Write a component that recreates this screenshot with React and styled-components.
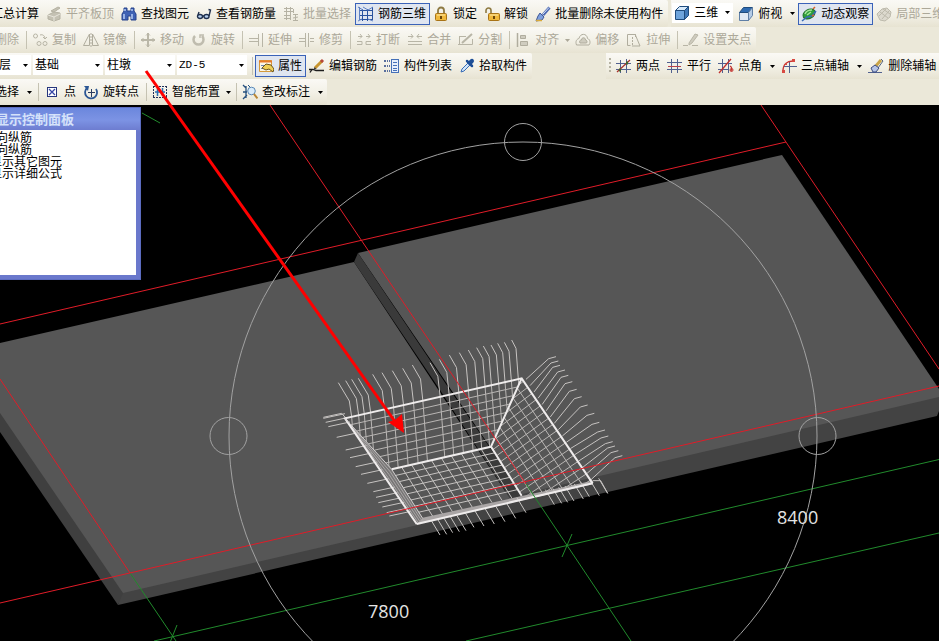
import * as React from "react";

import styled, { createGlobalStyle, css } from "styled-components";

const GlobalStyle = createGlobalStyle`
  * {
    box-sizing: border-box;
  }

  body {
    margin: 0;
    background: #000;
    font-family: "Liberation Sans", "Noto Sans CJK SC", sans-serif;
    font-size: 12px;
    line-height: 16px;
    color: #000;
  }
`;

const Window = styled.div`
  position: relative;
  display: flex;
  flex-direction: column;
  min-height: 100vh;
  overflow: hidden;
`;

const ToolArea = styled.header`
  background: #ebe8d9;
  overflow: hidden;
`;

const ToolRow = styled.div`
  display: flex;
  height: ${props => (props.$first ? "27px" : "26px")};
  margin-left: -14px;
`;

const Band = styled.div`
  display: flex;
  flex: none;
  align-items: center;
  padding: 0 1px 0 ${props => props.$lead || 0}px;
  background: linear-gradient(#faf9f5, #f3f1e7 50%, #e7e3d2);
  border-radius: 0 2px 2px 0;
  white-space: nowrap;
`;

const Spacer = styled.div`
  flex: none;
  width: ${props => props.$width}px;
`;

const ToolButton = styled.button`
  display: flex;
  flex: none;
  align-items: center;
  gap: 4px;
  height: 22px;
  padding: 0 3px 0 2px;
  border: 1px solid transparent;
  background: none;
  font: inherit;
  color: #000;

  &:disabled {
    color: #aca899;
  }

  ${props =>
    props.$pressed &&
    css`
      border-color: #3a62b8;
      background: #dfe5f0;
    `}
`;

const Icon = styled.svg`
  flex: none;
  width: 16px;
  height: 16px;
  fill: none;
`;

const CaretButton = styled.button`
  display: flex;
  flex: none;
  align-items: center;
  justify-content: center;
  width: ${props => (props.$tight ? "9px" : "12px")};
  height: 22px;
  padding: 0;
  border: 0;
  background: none;
  color: ${props => (props.disabled ? "#aca899" : "#000")};
`;

const CaretShape = styled.svg`
  flex: none;
  width: 5px;
  height: 3px;
  fill: currentColor;
`;

const Divider = styled.span`
  flex: none;
  width: 1px;
  height: 18px;
  margin: 0 2px 0 3px;
  background: #c5c2b2;
`;

const Grip = styled.span`
  flex: none;
  width: 2px;
  height: 16px;
  margin: 0 2px 0 3px;
  background: repeating-linear-gradient(#b5b2a2 0 2px, transparent 2px 4px);
`;

const Combo = styled.label`
  display: flex;
  flex: none;
  align-items: center;
  gap: 4px;
  width: ${props => props.$width}px;
  height: 20px;
  margin: 0 2px 2px 0;
  padding: 0 3px 0 2px;
  background: #fff;

  select {
    flex: 1;
    min-width: 0;
    appearance: none;
    padding: 0;
    border: 0;
    background: none;
    font: inherit;
    color: inherit;
    ${props =>
      props.$mono &&
      css`
        font-family: "Liberation Mono", monospace;
        font-size: 11px;
      `}
  }
`;

const Viewport = styled.main`
  position: relative;
  flex: 1;
  min-height: 536px;
  background: #000;
`;

const Scene = styled.svg`
  position: absolute;
  inset: 0;
  width: 100%;
  height: 100%;
  fill: none;

  text {
    font-family: "Open Sans", "Noto Sans", sans-serif;
    font-size: 18px;
    fill: #e4e4e4;
  }
`;

const Annotation = styled.svg`
  position: absolute;
  inset: 0;
  width: 100%;
  height: 100%;
  pointer-events: none;
`;

const Palette = styled.section`
  position: absolute;
  top: 2px;
  left: -16px;
  width: 157px;
  padding: 0 4px 4px 5px;
  background: linear-gradient(#6b87dd, #7c93e4 12px, #6a78cc 24px, #6a78cc);
  border: 1px solid #5c6cc0;
`;

const PaletteTitle = styled.h2`
  margin: 0;
  padding: 3px 0 2px 6px;
  font-size: 13px;
  line-height: 17px;
  font-weight: bold;
  color: #d5e2fa;
  white-space: nowrap;
`;

const PaletteList = styled.ul`
  min-height: 145px;
  margin: 0;
  padding: 2px 0;
  list-style: none;
  background: #fff;
  line-height: 12px;
  white-space: nowrap;
`;

const PaletteItem = styled.li`
  padding-left: ${props => (props.$nested ? "6px" : "0")};
`;

const Caret = () => (
  <CaretShape viewBox="0 0 5 3">
    <path d="M0 0h5L2.500 3z" />
  </CaretShape>
);

const glyphs = {
  level: (
    <g fill="#c4c1b3" stroke="#b5b2a3">
      <path d="M2 9l6-3 6 1v6l-6 2-6-2zM5 5l7-4 2 1-6 4z" />
      <path d="M2 9l6 2v4M8 11l6-3" stroke="#e8e6dc" />
    </g>
  ),
  find: (
    <g>
      <path
        d="M3 2h3v3h4V2h3v3l2 3v6h-5v-4H7v4H1V8l2-3z"
        fill="#3f62b4"
        stroke="#27438c"
      />
      <path d="M3 8v5M11 8v5M4 3v2M11 3v2" stroke="#b7cdf5" strokeWidth="1.500" />
    </g>
  ),
  glasses: (
    <g stroke="#20304e" strokeWidth="1.400">
      <ellipse cx="4" cy="10.500" rx="2.500" ry="2" fill="#b8d1ee" />
      <ellipse cx="10.500" cy="10.500" rx="2.500" ry="2" fill="#b8d1ee" />
      <path d="M6.500 10h1.500M2 9l1-3M13 10l1.500-6-2-.5" />
    </g>
  ),
  batch: (
    <g stroke="#b5b2a3">
      <path d="M1 2.500h9M1 5.500h9M1 9.500h6M1 12.500h6M3.500 1v13M7.500 1v13M10.500 3v4" />
      <path d="M10 8.500h5M10 12l5-1M12.500 8v7M10 14.500h5" />
    </g>
  ),
  rebar: (
    <g stroke="#29529e" strokeWidth="1">
      <path d="M4.500 3v12M9.500 3v12M14.500 1v13M1 4.500h14M1 9.500h14M1 13.500h14" />
      <path d="M0 1l5 3M5 1l5 3M10 4l5-3M0 15l4-2M10 13l5 2M1.500 1v13" stroke="#5d80c2" />
    </g>
  ),
  lock: (
    <g>
      <path d="M5 8V4.500a3 3 0 016 0V8" stroke="#8e7a42" strokeWidth="1.800" />
      <rect x="2.500" y="7.500" width="11" height="7" rx="1" fill="#f0b93c" stroke="#a87316" />
      <path d="M4 9h8" stroke="#fde9a5" />
      <path d="M8 10v3" stroke="#6b4708" strokeWidth="2" />
    </g>
  ),
  unlock: (
    <g>
      <path d="M2 7V4.500a2.500 2.500 0 015 0V8" stroke="#8e7a42" strokeWidth="1.600" />
      <rect x="4.500" y="7.500" width="11" height="7" rx="1" fill="#f0b93c" stroke="#a87316" />
      <path d="M6 9h8" stroke="#fde9a5" />
      <path d="M10 10v3" stroke="#6b4708" strokeWidth="2" />
    </g>
  ),
  brush: (
    <g>
      <path d="M14.500 1.500L8 9" stroke="#4f6cb4" strokeWidth="3" />
      <path d="M14 1.500L8 8" stroke="#d7e2f7" />
      <path d="M5 7l4 4-2 3-6 1 2-5z" fill="#7ea0de" stroke="#3d5798" />
      <path d="M1 14.500h6" stroke="#d8a93a" strokeWidth="1.500" />
    </g>
  ),
  cube: (
    <g stroke="#1f4c7e" strokeLinejoin="round">
      <path d="M1.500 5.500h9v9h-9z" fill="#6ea4dc" />
      <path d="M1.500 5.500l4-4h9l-4 4z" fill="#d6e9fa" />
      <path d="M10.500 5.500l4-4v9l-4 4z" fill="#3f78b8" />
    </g>
  ),
  cubeTop: (
    <g stroke="#5f7fa6" strokeLinejoin="round">
      <path d="M1.500 6.500h9v8h-9z" fill="#dfe9f5" />
      <path d="M1.500 6.500l4-5h9l-4 5z" fill="#2f6bb0" stroke="#1f4c7e" />
      <path d="M10.500 6.500l4-5v8l-4 5z" fill="#b4cbe6" />
    </g>
  ),
  orbit: (
    <g>
      <ellipse cx="8" cy="8" rx="6.500" ry="4.500" fill="#2f9e3b" stroke="#1e6d2b" transform="rotate(-30 8 8)" />
      <path d="M4 8c1-3 4-4 7-4M6 9l4-3" stroke="#a6e59a" strokeWidth="1.500" />
      <path d="M1 15l5-4 5-1 4-5" stroke="#376bb5" strokeWidth="1.500" />
      <path d="M12 3l2-2M11 10l2-1" stroke="#d4622d" strokeWidth="1.500" />
    </g>
  ),
  partial: (
    <g fill="#dcd9ce" stroke="#bdbaac">
      <path d="M1 8l5-5 5-1 4 4-1 5-5 4-5-1z" />
      <path d="M4 6l8 6M7 3l7 5M3 10l7-7M6 13l7-8" />
    </g>
  ),
  copy: (
    <g stroke="#b8b5a6">
      <circle cx="3.500" cy="4" r="2" />
      <circle cx="7" cy="11.500" r="2" />
      <circle cx="13" cy="11.500" r="2" />
      <path d="M8 3c3-1 5 1 5 4M11 5l2 2 2-2" />
    </g>
  ),
  mirror: (
    <g stroke="#b0ad9e">
      <path d="M6.500 2v11.500h-6zM9.500 2v11.500h6z" />
      <path d="M8 1v14" strokeDasharray="2 1" />
    </g>
  ),
  move: (
    <g stroke="#bab7a8">
      <path d="M7.500 1v14M8.500 1v14M1 7.500h14M1 8.500h14" />
      <path d="M6 3.500L8 1.500l2 2M6 12.500l2 2 2-2M3.500 6l-2 2 2 2M12.500 6l2 2-2 2" />
    </g>
  ),
  rotate: (
    <g stroke="#bfbcae" strokeWidth="2.500">
      <path d="M4 4a5 5 0 107 0" />
      <path d="M9 6V3h4" strokeWidth="1.500" />
    </g>
  ),
  extend: (
    <g stroke="#b8b5a6">
      <path d="M1 6.500h9M1 9.500h9" />
      <path d="M10.500 2v12M14.500 1v14" />
    </g>
  ),
  trim: (
    <g stroke="#b8b5a6">
      <path d="M0 6.500h6M0 9.500h6M11 6.500h4M11 9.500h4" />
      <path d="M6.500 1v14M9.500 1v14" />
    </g>
  ),
  breakLine: (
    <g stroke="#b8b5a6">
      <path d="M1 9.500h5v3H1M15 9.500h-5v3h5" />
      <path d="M2 4.500h4M4 2l2 2.500-2 2M14 4.500h-4M12 2l2 2.500-2 2" />
    </g>
  ),
  merge: (
    <g stroke="#b8b5a6">
      <path d="M1 9.500h14M1 12.500h14" />
      <path d="M1 4.500h5M4 2l2 2.500-2 2M15 4.500h-5M12 2l-2 2.500 2 2" />
    </g>
  ),
  split: (
    <g stroke="#b8b5a6">
      <path d="M1 4.500h7M1.500 4v8M0 12.500h14.500V7" />
      <path d="M4 11L14 2" strokeWidth="2" />
    </g>
  ),
  align: (
    <g stroke="#b0ad9e">
      <path d="M2.500 1v14" strokeWidth="1.500" />
      <path d="M5.500 3.500h5v3h-5zM5.500 9.500h7v4h-7z" fill="#cfccbf" />
    </g>
  ),
  offset: (
    <g stroke="#b0ad9e">
      <path d="M1.500 13C0 9 2 7 4 6.500 5 1 12 1 12.500 6.500c3 1 3 5 1.500 6.500z" />
      <path d="M5 11c-1-2 0-3 1.500-3 0-3 4-3 4 0 1.500 0 2 2 1 3z" fill="#cfccbf" />
    </g>
  ),
  stretch: (
    <g stroke="#b0ad9e">
      <path d="M9.500 5V2.500h-8v11h3M9 2l5 12H6" />
      <path d="M6.500 5v9" strokeDasharray="2 1" />
    </g>
  ),
  gripPoint: (
    <g stroke="#b8b5a6">
      <path d="M0 13.500h5M9 13.500h6" />
      <path d="M6 11l6-9 3 1-6 8-3 2z" fill="#cfccbf" />
    </g>
  ),
  props: (
    <g>
      <path d="M1.500 2.500h12v11h-12z" fill="#fdf6e6" stroke="#d59a3b" />
      <path d="M1 3.500h13" stroke="#e8792b" strokeWidth="2" />
      <path d="M3 7.500h3M3 10.500h2" stroke="#6d87b7" />
      <path d="M4 10l4-4 5 1 3 4-1 3-4-3-3 1-2-1z" fill="#efcf55" stroke="#6a5420" />
    </g>
  ),
  editRebar: (
    <g>
      <path d="M0 11.500h4l3 1h8M1 14.500l2-3" stroke="#1c1c1c" strokeWidth="1.300" />
      <path d="M6 10l7-7" stroke="#c8952e" strokeWidth="3" />
      <path d="M12 4l2-2" stroke="#b5473b" strokeWidth="3" />
      <path d="M4.500 12l1-3 2 2z" fill="#333" />
    </g>
  ),
  list: (
    <g>
      <path d="M0 3h2M0 8h2M0 13h2M3 3h1M3 8h1M3 13h1M5 3h1M5 8h1M5 13h1" stroke="#5a6f9d" strokeWidth="2" />
      <rect x="7.500" y="1.500" width="7" height="13" fill="#e6eefb" stroke="#4570b8" />
      <path d="M9 4.500h4M9 7.500h4M9 10.500h4M9 12.500h4" stroke="#4570b8" />
    </g>
  ),
  picker: (
    <g>
      <path d="M2 14l1-3 6-6 2 2-6 6z" fill="#cfe4fa" stroke="#3a6db5" />
      <path d="M8 3l5 5M10 5l3-3" stroke="#1d4e97" strokeWidth="2.500" strokeLinecap="round" />
      <path d="M11 5l2-2" stroke="#1d4e97" strokeWidth="4" strokeLinecap="round" />
    </g>
  ),
  twoPoint: (
    <g>
      <path d="M4.500 2v13M10.500 1v14M0 5.500h15M0 11.500h15" stroke="#51618f" />
      <path d="M1 14L14 2" stroke="#a5322c" strokeWidth="1.200" />
      <path d="M3 12h2M10 5h2" stroke="#41682a" strokeWidth="3" />
    </g>
  ),
  parallel: (
    <g>
      <path d="M4.500 1v14M10.500 1v14" stroke="#51618f" />
      <path d="M0 4.500h15M0 11.500h15" stroke="#51618f" />
      <path d="M1 8.500h13" stroke="#b8434b" />
    </g>
  ),
  angle: (
    <g>
      <path d="M4.500 1v14M10.500 1v14M0 5.500h14M0 11.500h11" stroke="#51618f" />
      <path d="M1 15L13 1M12 8c2 1 2 3 1 5" stroke="#c3322e" strokeWidth="1.300" />
      <circle cx="13.500" cy="12" r="1.500" stroke="#c3322e" />
    </g>
  ),
  threePoint: (
    <g>
      <path d="M8.500 3v12M3 8.500h13" stroke="#51618f" />
      <path d="M2 13c0-7 4-10 10-10" stroke="#c8322e" strokeWidth="1.300" />
      <path d="M1 12h3v3H1zM4 5h2v2H4zM11 1h3v3h-3z" fill="#d84a42" />
    </g>
  ),
  eraser: (
    <g>
      <path d="M0 14.500h14" stroke="#51618f" />
      <path d="M7 9l6-7" stroke="#caa548" strokeWidth="3" />
      <path d="M13 1l2 2-5 7" stroke="#55637f" />
      <path d="M3 10l4-3 4 3-3 4H5z" fill="#b6c4e6" stroke="#3c4c80" />
    </g>
  ),
  point: (
    <g stroke="#26367c">
      <rect x="3.500" y="3.500" width="9" height="9" fill="#fff" />
      <path d="M5 5l6 6M11 5l-6 6" stroke="#3646a6" strokeWidth="1.300" />
    </g>
  ),
  rotatePoint: (
    <g>
      <path d="M4 4a6 6 0 109 1" stroke="#2b5694" strokeWidth="1.800" />
      <path d="M1 2l5 0-1 5z" fill="#2b5694" />
      <path d="M8.500 5v8M5 8.500h7" stroke="#2b3d60" />
    </g>
  ),
  smart: (
    <g>
      <path d="M1.500 2v12M14.500 2v12M1 2.500h14M1 13.500h14" stroke="#222f57" strokeDasharray="2 1" />
      <path d="M5.500 4v8M10.500 4v8M3 8h10" stroke="#2d6eb0" strokeWidth="1.500" />
    </g>
  ),
  check: (
    <g>
      <path d="M1 1l3 3M1 15l4-4M4 2v12M1 8h4" stroke="#26507f" strokeWidth="1.300" />
      <circle cx="9.500" cy="7" r="3.800" fill="#d9ecfb" stroke="#5a87b5" />
      <path d="M12 10l3.500 4.500" stroke="#b98634" strokeWidth="2" />
      <path d="M6 1l2 2" stroke="#26507f" />
    </g>
  )
};

const Glyph = ({ name }) => <Icon viewBox="0 0 16 16">{glyphs[name]}</Icon>;

const Tool = ({ icon, label, disabled, pressed }) => (
  <ToolButton disabled={disabled} $pressed={pressed}>
    {icon && <Glyph name={icon} />}
    {label}
  </ToolButton>
);

const Drop = ({ tight, disabled, label }) => (
  <CaretButton $tight={tight} disabled={disabled} aria-label={label}>
    <Caret />
  </CaretButton>
);

const ComboBox = ({ icon, value, width, label, mono }) => (
  <Combo $width={width} $mono={mono}>
    {icon && <Glyph name={icon} />}
    <select defaultValue={value} aria-label={label}>
      <option value={value}>{value}</option>
    </select>
    <Caret />
  </Combo>
);

// The pit cage is laid out on a grid three times finer than the scene.
const lerp = (a, b, t) => [a[0] + (b[0] - a[0]) * t, a[1] + (b[1] - a[1]) * t];
const seg = (...points) => "M" + points.map(p => p.join(" ")).join("L");

const pit = {
  topLeft: [105, 265],
  topRight: [635, 145],
  rimRight: [848, 460],
  rimLeft: [320, 582],
  floorLeft: [245, 418],
  floorRight: [543, 350],
  floorFrontRight: [635, 497],
  floorFrontLeft: [338, 565]
};

const backHooks = [
  [85, 158],
  [107, 152],
  [125, 148],
  [145, 145],
  [188, 133],
  [216, 128],
  [247, 122],
  [278, 115],
  [307, 105],
  [360, 98],
  [388, 88],
  [418, 75],
  [448, 68],
  [475, 60],
  [500, 53],
  [520, 48],
  [543, 45],
  [563, 40],
  [583, 37],
  [605, 30]
];

const leftHooks = [
  [40, 265],
  [47, 277],
  [55, 290],
  [80, 322],
  [107, 360],
  [120, 383],
  [137, 410],
  [153, 433],
  [172, 460],
  [190, 485],
  [198, 502],
  [205, 518],
  [217, 531],
  [230, 548],
  [238, 558]
];

const rightHooks = [
  [738, 80],
  [745, 93],
  [750, 106],
  [765, 120],
  [775, 136],
  [787, 155],
  [800, 178],
  [815, 200],
  [833, 225],
  [853, 250],
  [868, 277],
  [885, 300],
  [895, 318],
  [908, 335],
  [915, 348],
  [925, 362],
  [937, 377]
];

const frontHooks = [
  [390, 615],
  [410, 613],
  [428, 608],
  [448, 605],
  [468, 602],
  [492, 592],
  [522, 588],
  [553, 582],
  [585, 575],
  [617, 565],
  [648, 548],
  [733, 524],
  [755, 520],
  [773, 517],
  [792, 513],
  [820, 507],
  [838, 500],
  [868, 497],
  [893, 490]
];

const range = (count, fn) =>
  Array.from({ length: count }, (_, i) => fn((i + 1) / (count + 1), i));

const Cage = () => {
  const back = [];
  const backInside = [];
  backHooks.forEach(([x, y], i) => {
    const t = i / (backHooks.length - 1);
    const bend = [x + 33 - 20 * t, y + 55 - 30 * t];
    const rimX = bend[0] + 7;
    const rim = [rimX, 265 - (rimX - 105) * 0.226];
    back.push(seg([x, y], bend, rim));
    backInside.push(seg(rim, [rimX + 16, rim[1] + 210]));
  });

  const left = leftHooks.map(([x, y]) => seg([x, y], [x + 65, y - 14]));

  const right = [];
  const rightInside = [];
  rightHooks.forEach(([x, y], i) => {
    const t = i / (rightHooks.length - 1);
    const start = lerp([648, 148], [842, 450], t);
    right.push(seg(start, [x - 22, y + 6], [x, y]));
    rightInside.push(seg(start, [start[0] - 170, start[1] + 130 - 20 * t]));
  });

  const front = frontHooks.map(([x, y]) => seg([x - 27, y - 45], [x, y]));

  const backRows = range(7, t =>
    seg(lerp(pit.topLeft, pit.floorLeft, t), lerp(pit.topRight, pit.floorRight, t))
  );
  const sideRows = range(6, t =>
    seg(lerp(pit.topRight, pit.floorRight, t), lerp(pit.rimRight, pit.floorFrontRight, t))
  );
  const floorRows = range(7, t =>
    seg(lerp(pit.floorLeft, pit.floorFrontLeft, t), lerp(pit.floorRight, pit.floorFrontRight, t))
  );
  const floorCols = range(9, t =>
    seg(lerp(pit.floorLeft, pit.floorRight, t), lerp(pit.floorFrontLeft, pit.floorFrontRight, t))
  );
  const sliver = range(3, t =>
    seg(pit.topLeft, lerp(pit.floorLeft, [230, 450], t), lerp(pit.floorFrontLeft, pit.rimLeft, t))
  );

  return (
    <g transform="translate(310 330) scale(0.33333)">
      <defs>
        <clipPath id="backWall">
          <path d="M105 265L635 145L543 350L245 418z" />
        </clipPath>
        <clipPath id="sideWall">
          <path d="M635 145L848 460L635 497L543 350z" />
        </clipPath>
      </defs>
      <path
        d={seg(pit.topLeft, pit.floorLeft, pit.floorFrontLeft, pit.rimLeft) + "z"}
        fill="#8f8c8c"
        fillOpacity="0.6"
      />
      <path d="M320 582L338 563L848 452V463z" fill="#a9a5a5" />
      <CagePath
        $tone="#c6c3c1"
        d={[...back, ...left, ...right, ...front, ...floorRows, ...floorCols].join("")}
      />
      <CagePath $tone="#b9b6b4" clipPath="url(#backWall)" d={[...backInside, ...backRows].join("")} />
      <CagePath $tone="#b9b6b4" clipPath="url(#sideWall)" d={[...rightInside, ...sideRows].join("")} />
      <CagePath $tone="#a9a6a6" d={sliver.join("")} />
      <CagePath $tone="#c6c3c1" d="M40 262L95 250L108 265M848 452L872 452L893 490" />
      <CagePath
        $tone="#efecec"
        $heavy
        d={
          seg(pit.rimLeft, pit.topLeft, pit.topRight, pit.rimRight) +
          seg(pit.rimRight, pit.rimLeft) +
          seg(pit.floorLeft, pit.floorRight, pit.floorFrontRight) +
          seg(pit.topRight, pit.floorRight)
        }
      />
      <CagePath $tone="#d3d0d0" d={seg(pit.topLeft, pit.floorLeft, pit.floorFrontLeft)} />
    </g>
  );
};

const CagePath = styled.path`
  stroke: ${props => props.$tone};
  stroke-width: ${props => (props.$heavy ? 2 : 1)};
  vector-effect: non-scaling-stroke;
`;

const Model = () => (
  <Scene viewBox="0 105 939 536" preserveAspectRatio="xMinYMin slice">
    {/* side faces run under the top faces so that no seam shows */}
    <path d="M123 585L510 490L939 390V411L937 416L118 605z" fill="#434343" />
    <path d="M0 405L123 585V593L118 605L0 432z" fill="#3f3f3f" />
    <path d="M0 343L354 262L513 503L123 593L0 413z" fill="#565656" />
    <path d="M358 253L782 155L939 389V397L522 494z" fill="#565656" />
    <path d="M354 262L358 253L450 390L522 494L513 503L440 390z" fill="#3a3a3a" />

    <Cage />

    <g stroke="#218a2c">
      <path d="M142 113L160 123M130 573L176 641M526 484L631 641" />
      <path d="M154 641L939 459.500M466 641L939 533" />
      <path d="M572 534L562 557M177 625L169 645" />
    </g>
    <g stroke="#e01c28">
      <path d="M0 324L786 142M270 105L526 484M761 105L939 369" />
      <path d="M0 603L939 386M0 379L130 573" />
    </g>
    <g stroke="#a2a2a2">
      <circle cx="523" cy="436" r="294" />
      <circle cx="523" cy="142" r="18.500" />
      <circle cx="228.500" cy="436" r="18.500" />
      <circle cx="817.500" cy="436" r="18.500" />
    </g>
    <text x="368" y="618">
      7800
    </text>
    <text x="777" y="524">
      8400
    </text>
  </Scene>
);

const MainTools = () => (
  <ToolRow $first>
    <Band $lead={2}>
      <Tool label="汇总计算" />
      <Tool icon="level" label="平齐板顶" disabled />
      <Tool icon="find" label="查找图元" />
      <Tool icon="glasses" label="查看钢筋量" />
      <Tool icon="batch" label="批量选择" disabled />
      <Tool icon="rebar" label="钢筋三维" pressed />
      <Tool icon="lock" label="锁定" />
      <Tool icon="unlock" label="解锁" />
      <Tool icon="brush" label="批量删除未使用构件" />
    </Band>
    <Spacer $width={3} />
    <Band $lead={1}>
      <ComboBox icon="cube" value="三维" width={61} label="视图" />
      <Tool icon="cubeTop" label="俯视" />
      <Drop label="俯视选项" />
      <Tool icon="orbit" label="动态观察" pressed />
      <Tool icon="partial" label="局部三维" disabled />
    </Band>
  </ToolRow>
);

const EditTools = () => (
  <ToolRow>
    <Band $lead={6}>
      <Tool label="删除" disabled />
      <Divider />
      <Tool icon="copy" label="复制" disabled />
      <Tool icon="mirror" label="镜像" disabled />
      <Divider />
      <Tool icon="move" label="移动" disabled />
      <Tool icon="rotate" label="旋转" disabled />
      <Divider />
      <Tool icon="extend" label="延伸" disabled />
      <Tool icon="trim" label="修剪" disabled />
      <Divider />
      <Tool icon="breakLine" label="打断" disabled />
      <Tool icon="merge" label="合并" disabled />
      <Tool icon="split" label="分割" disabled />
      <Divider />
      <Tool icon="align" label="对齐" disabled />
      <Drop tight disabled label="对齐选项" />
      <Tool icon="offset" label="偏移" disabled />
      <Tool icon="stretch" label="拉伸" disabled />
      <Divider />
      <Tool icon="gripPoint" label="设置夹点" disabled />
    </Band>
  </ToolRow>
);

const ElementTools = () => (
  <ToolRow>
    <Band $lead={11}>
      <ComboBox value="层" width={34} label="楼层" />
      <ComboBox value="基础" width={70} label="构件类别" />
      <ComboBox value="柱墩" width={70} label="构件类型" />
      <ComboBox value="ZD-5" width={70} label="构件名称" mono />
      <Divider />
      <Tool icon="props" label="属性" pressed />
      <Tool icon="editRebar" label="编辑钢筋" />
      <Tool icon="list" label="构件列表" />
      <Tool icon="picker" label="拾取构件" />
    </Band>
    <Spacer $width={74} />
    <Band>
      <Grip />
      <Tool icon="twoPoint" label="两点" />
      <Tool icon="parallel" label="平行" />
      <Tool icon="angle" label="点角" />
      <Drop label="点角选项" />
      <Tool icon="threePoint" label="三点辅轴" />
      <Drop label="三点辅轴选项" />
      <Tool icon="eraser" label="删除辅轴" />
    </Band>
  </ToolRow>
);

const DrawTools = () => (
  <ToolRow>
    <Band $lead={6}>
      <Tool label="选择" />
      <Drop label="选择选项" />
      <Divider />
      <Tool icon="point" label="点" />
      <Tool icon="rotatePoint" label="旋转点" />
      <Divider />
      <Tool icon="smart" label="智能布置" />
      <Drop tight label="智能布置选项" />
      <Divider />
      <Tool icon="check" label="查改标注" />
      <Drop label="查改标注选项" />
    </Band>
  </ToolRow>
);

const DisplayPalette = () => (
  <Palette>
    <PaletteTitle>显示控制面板</PaletteTitle>
    <PaletteList>
      <PaletteItem $nested>向纵筋</PaletteItem>
      <PaletteItem $nested>向纵筋</PaletteItem>
      <PaletteItem>显示其它图元</PaletteItem>
      <PaletteItem>显示详细公式</PaletteItem>
    </PaletteList>
  </Palette>
);

export default class App extends React.Component {
  render() {
    return (
      <Window>
        <GlobalStyle />
        <ToolArea>
          <MainTools />
          <EditTools />
          <ElementTools />
          <DrawTools />
        </ToolArea>
        <Viewport>
          <Model />
          <DisplayPalette />
        </Viewport>
        <Annotation>
          <path d="M146 71L396 423" stroke="#f00" strokeWidth="3" />
          <path d="M404 433L388 422L395 420L402 414z" fill="#f00" />
        </Annotation>
      </Window>
    );
  }
}
